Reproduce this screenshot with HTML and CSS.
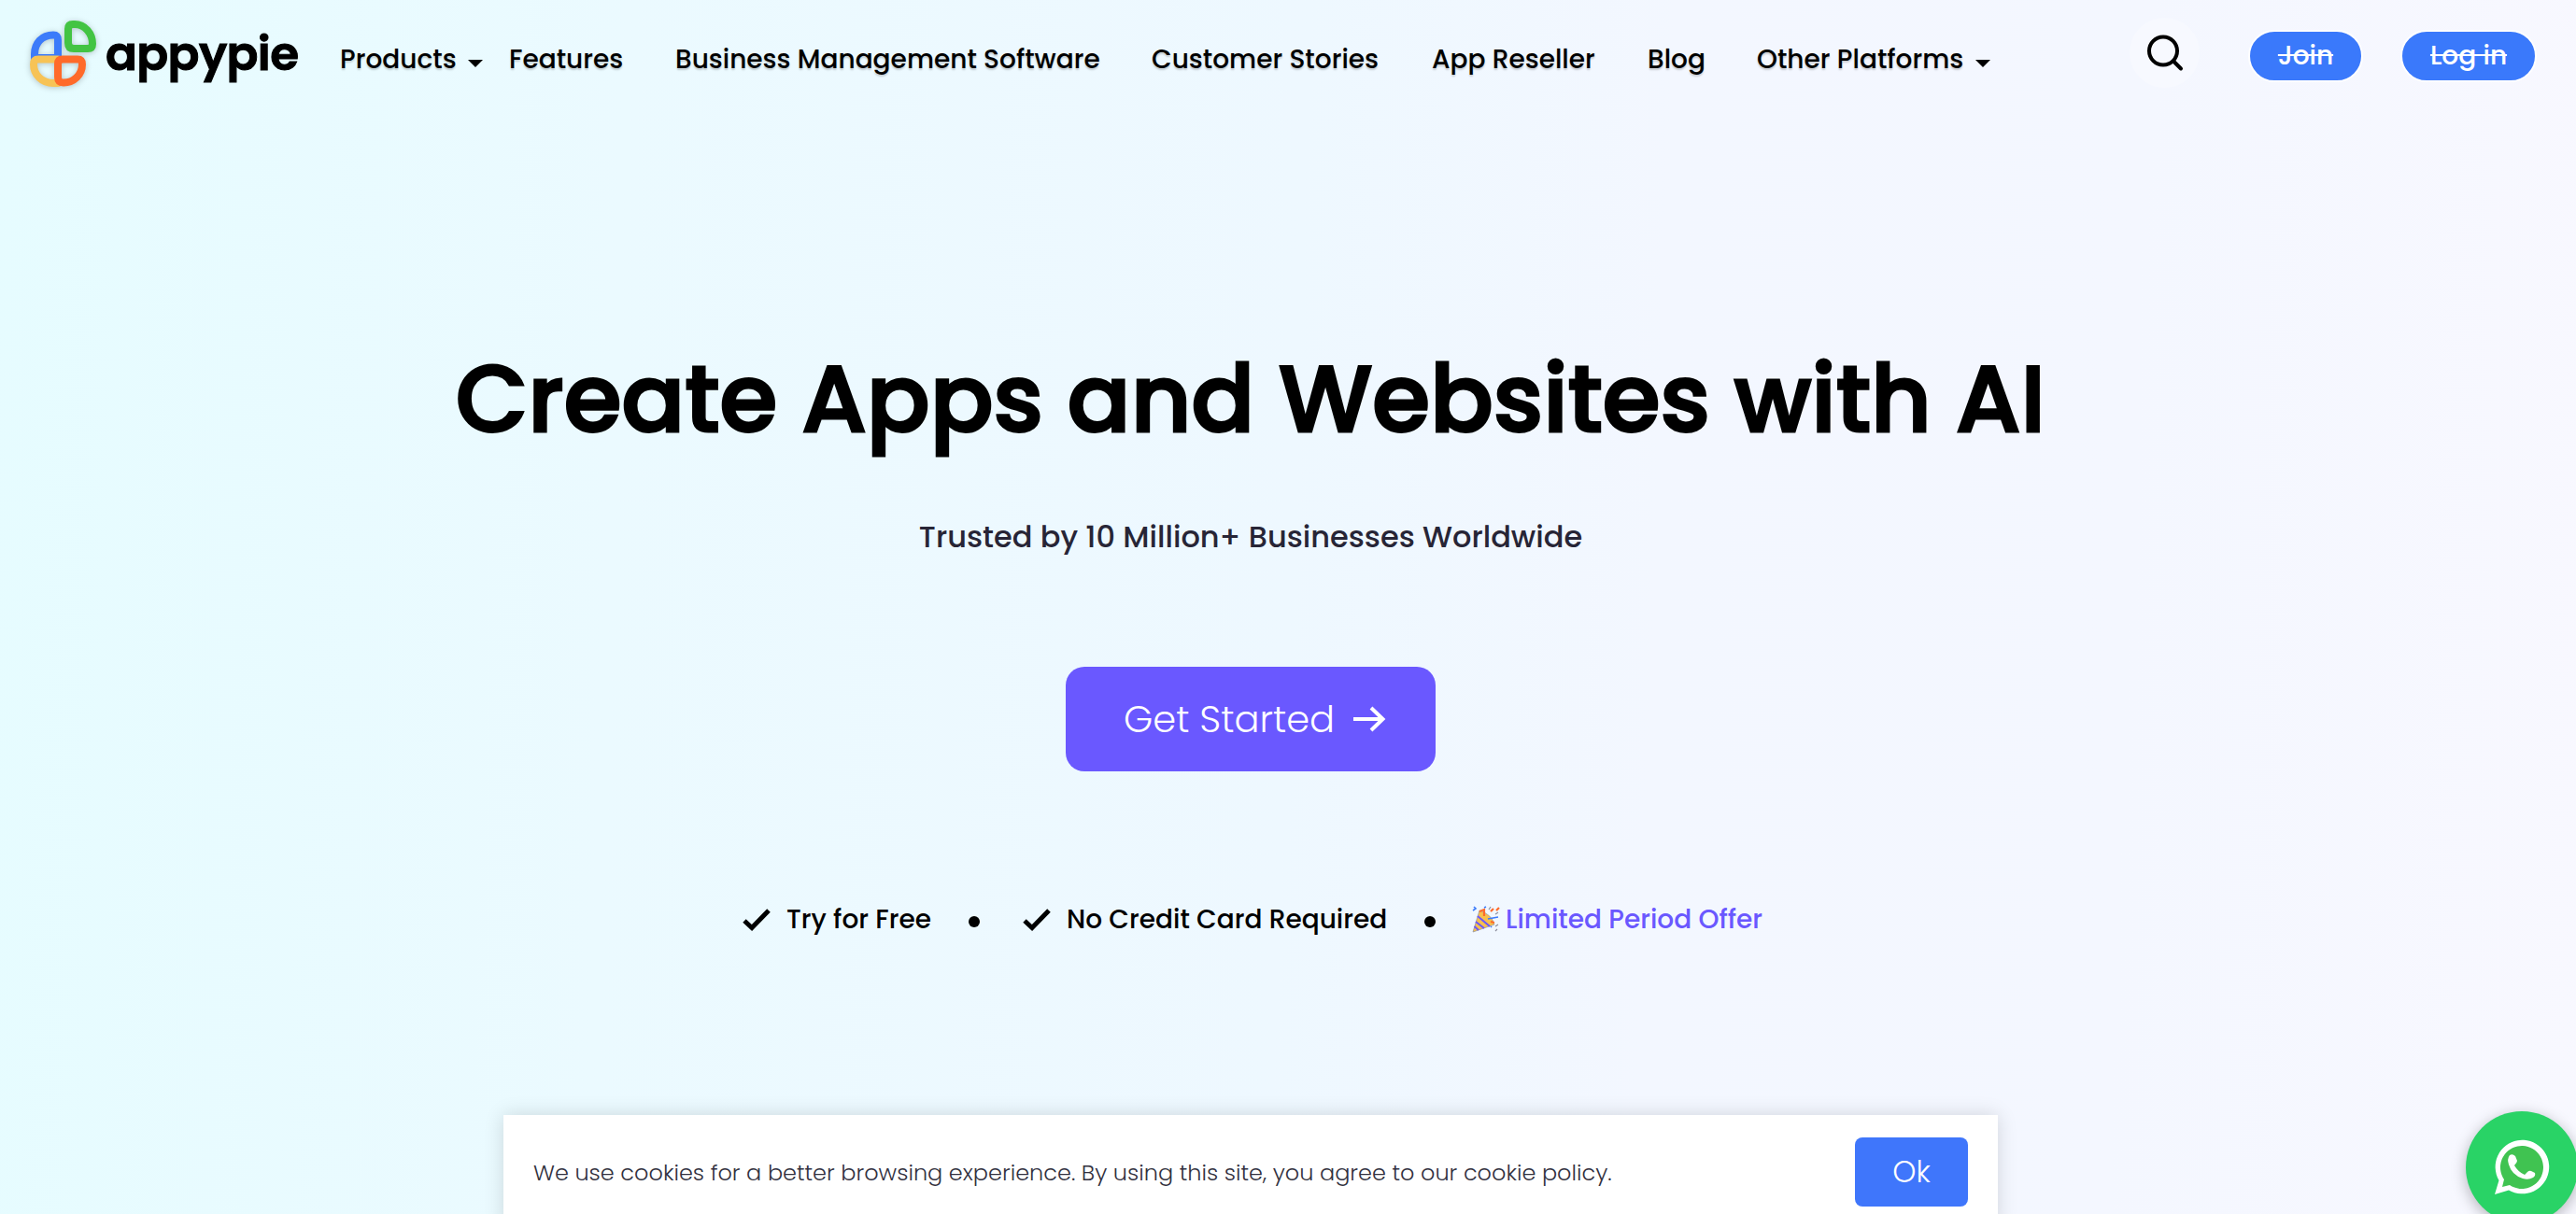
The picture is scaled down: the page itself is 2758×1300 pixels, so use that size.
FILE: index.html
```html
<!DOCTYPE html>
<html lang="en">
<head>
<meta charset="utf-8">
<title>Appy Pie</title>
<link rel="stylesheet" href="styles.css">
</head>
<body>
<header class="header">
  <a class="logo">
    <svg class="logo-mark" width="76" height="78" viewBox="0 0 76 78">
      <g fill="none" stroke-width="8" stroke-linejoin="round">
        <path stroke="#3c7bfa" d="M7 42V38C7 26 15 17.500 27 17.500Q32 17.500 32 23V42Z"/>
        <path stroke="#f7c356" d="M11 43.500H32V69H27C15 69 6 60 6 49Q6 43.500 11 43.500Z"/>
        <path stroke="#ff6a2a" d="M37 43.500H53Q58 43.500 58 49C58 60 49 68.500 38 68.500Q32 68.500 32 62V48.500Q32 43.500 37 43.500Z"/>
        <path stroke="#43c443" d="M48 6H50C61 6 69 16 69 27Q69 32 64 32H49Q43 32 43 26V11Q43 6 48 6Z"/>
      </g>
    </svg>
    <span class="logo-text">appypie</span>
  </a>
  <nav class="nav">
    <a class="nav-item products"><span>Products</span><i class="caret"></i></a>
    <a class="nav-item features"><span>Features</span></a>
    <a class="nav-item business"><span>Business Management Software</span></a>
    <a class="nav-item stories"><span>Customer Stories</span></a>
    <a class="nav-item reseller"><span>App Reseller</span></a>
    <a class="nav-item blog"><span>Blog</span></a>
    <a class="nav-item platforms"><span>Other Platforms</span><i class="caret"></i></a>
  </nav>
  <button class="search" aria-label="Search">
    <svg width="40" height="40" viewBox="0 0 40 40" fill="none" stroke="#000" stroke-width="4" stroke-linecap="round"><circle cx="18" cy="17.5" r="15"/><path d="M29 28.500L37 36.500"/></svg>
  </button>
  <a class="pill join">Join</a>
  <a class="pill login">Log in</a>
</header>
<main class="hero">
  <h1 class="title">Create Apps and Websites with AI</h1>
  <p class="subtitle">Trusted by 10 Million+ Businesses Worldwide</p>
  <a class="cta">Get Started
    <svg width="36" height="28" viewBox="0 0 36 28" fill="none" stroke="#fff" stroke-width="4"><path d="M1 14H33M20 2L32.5 14L20 26"/></svg>
  </a>
  <ul class="perks">
    <li class="perk free"><svg class="check" width="30" height="24" viewBox="0 0 30 24"><path d="M2 13L10 20.500L28 2" fill="none" stroke="#000" stroke-width="5"/></svg>Try for Free</li>
    <li class="dot"></li>
    <li class="perk card"><svg class="check" width="30" height="24" viewBox="0 0 30 24"><path d="M2 13L10 20.500L28 2" fill="none" stroke="#000" stroke-width="5"/></svg>No Credit Card Required</li>
    <li class="dot"></li>
    <li class="perk offer">
      <svg class="party" width="30" height="30" viewBox="0 0 30 30" fill="none">
        <path fill="#f7c04e" stroke="#8d8f9d" stroke-width=".7" d="M8 5Q21 9 24 20L1 28Z"/>
        <path stroke="#6a58ff" stroke-width="2" d="M6 11L19 22M4 17L13 24M2.500 22L7 26"/>
        <path stroke="#ff6a2a" stroke-width="2.200" d="M8 6L13 4V11M20 6L23 3M26 5L29 2M20 17L24 18"/>
        <path stroke="#3c7bfa" stroke-width="1.600" d="M1 5L4 3L2 1M13 2L15 1M17 14L28 12M20 22L21 23"/>
        <path stroke="#8d8f9d" stroke-width="1.200" d="M18 4L20 1M25 9L28 7M25 22L28 20M27 25L25 27"/>
      </svg>
      Limited Period Offer</li>
  </ul>
</main>
<aside class="cookie">
  <p class="cookie-text">We use cookies for a better browsing experience. By using this site, you agree to our cookie policy.</p>
  <button class="ok">Ok</button>
</aside>
<a class="whatsapp" aria-label="WhatsApp">
  <svg width="60" height="60" viewBox="0 0 60 60">
    <path d="M1 59L5.500 44A28.800 28.800 0 1 1 16 54.500Z" fill="#fff"/>
    <path d="M9 51L11 43A23 23 0 1 1 17 49Z" fill="#40c351"/>
    <path d="M17 17Q20 15 23 18L25 23Q25 25 22 28Q26 35 33 38L36 35Q38 33 40 34L44 36Q45 39 42 41Q37 44 31 42Q19 38 16 27Q14 21 17 17Z" fill="#fff"/>
  </svg>
</a>
</body>
</html>
```
FILE: styles.css
```css
* { box-sizing: border-box; }

body {
  margin: 0;
  width: 2758px;
  height: 1300px;
  overflow: hidden;
  position: relative;
  font-family: "Poppins", "Inter", sans-serif;
  color: #000;
  background: linear-gradient(92deg, #e6fcff 0%, #ebfaff 24%, #eef8ff 50%, #f3f7ff 64%, #f4f7ff 82%, #f8f8ff 100%);
}

button { border: 0; padding: 0; font-family: inherit; }

.header { display: flex; align-items: flex-start; height: 126px; padding-left: 30px; white-space: nowrap; }
.logo { display: flex; width: 334px; }
.logo-mark { margin: 20px 7px 0 0; filter: drop-shadow(0 1px 3px rgba(0, 0, 0, .22)); }
.logo-text { padding-top: 2px; font-size: 50px; font-weight: 600; line-height: 112px; letter-spacing: -.6px; -webkit-text-stroke: 1px #000; }

.nav { display: flex; width: 1916px; font-size: 28px; font-weight: 500; line-height: 128px; text-shadow: 0 2px 2px rgba(0, 0, 0, .18); }
.nav-item { display: flex; align-items: center; }
.products { width: 181px; }
.features { width: 178px; }
.business { width: 510px; }
.stories { width: 300px; }
.reseller { width: 231px; }
.blog { width: 117px; }
.platforms { width: 250px; }
.nav-item span { flex: 1; }
.caret { margin-top: 8px; border: 8px solid transparent; border-top-color: #000; border-bottom: 0; }
.products .caret { margin-right: 28px; }

.search { display: flex; align-items: center; justify-content: center; width: 75px; height: 75px; margin-top: 19px; border-radius: 50%; background: #f7f9ff; }
.pill { display: flex; align-items: center; justify-content: center; height: 56px; margin-top: 32px; border: 2px solid #fff; border-radius: 28px; background: #3a79fb; color: #fff; font-size: 28px; font-weight: 500; line-height: 52px; text-decoration: line-through; }
.join { width: 123px; margin-left: 52px; }
.login { width: 146px; margin-left: 40px; }

.hero { display: flex; flex-direction: column; align-items: center; width: 2678px; padding-top: 230px; white-space: nowrap; }
.title { margin: 0; font-size: 100px; font-weight: 500; line-height: 142px; -webkit-text-stroke: 3px #000; }
.subtitle { margin: 57px 0 0; color: #272536; font-size: 32px; font-weight: 500; line-height: 40px; }
.cta { display: flex; align-items: center; justify-content: space-between; width: 396px; height: 112px; margin-top: 119px; padding: 0 53px 0 62px; border-radius: 20px; background: #6a58ff; color: #fff; font-size: 40px; font-weight: 300; }
.perks { display: flex; align-items: center; width: 1088px; height: 40px; margin: 139px 0 0; padding: 0; list-style: none; font-size: 28px; font-weight: 500; }
.perk, .dot { flex-shrink: 0; }
.perk { display: flex; align-items: center; }
.check { margin-right: 17px; }
.free { width: 242px; }
.card { width: 430px; margin-left: 46px; }
.dot { width: 12px; height: 12px; margin-top: 4px; border-radius: 50%; background: #000; }
.offer { margin-left: 39px; color: #6a58ff; }
.party { margin-right: 6px; }

.cookie { position: absolute; left: 539px; top: 1194px; display: flex; justify-content: space-between; width: 1600px; height: 120px; padding: 24px 32px 0; background: #fff; box-shadow: 0 0 20px rgba(0, 0, 0, .14); }
.cookie-text { margin: 0; color: #323140; font-size: 24px; font-weight: 300; line-height: 75px; white-space: nowrap; }
.ok { width: 121px; height: 74px; border-radius: 8px; background: #3f76fb; color: #fff; font-size: 32px; font-weight: 300; }

.whatsapp { position: absolute; left: 2640px; top: 1190px; display: flex; align-items: center; justify-content: center; width: 120px; height: 120px; border-radius: 50%; background: #29d366; box-shadow: 0 4px 16px rgba(0, 0, 0, .28); }
```
